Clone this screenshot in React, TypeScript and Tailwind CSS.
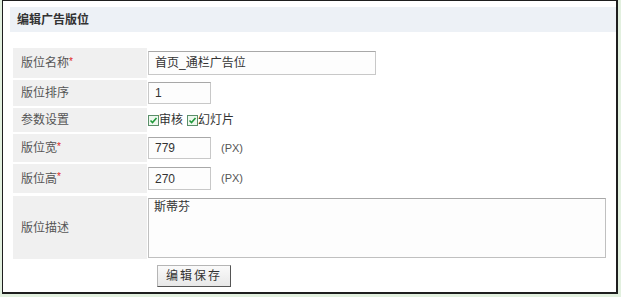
import React from 'react';

const Check: React.FC = () => (
  <svg width="11" height="11" viewBox="0 0 11 11" className="shrink-0">
    <rect x="0.5" y="0.5" width="10" height="10" fill="#eef8ee" stroke="#5b8f6a" />
    <path d="M2.5 5.5 L4.5 7.5 L8.5 3" fill="none" stroke="#1f9a3a" strokeWidth="1.6" />
  </svg>
);

const Label: React.FC<{ text: string; required?: boolean; h: string }> = ({ text, required, h }) => (
  <div className={`w-[134px] shrink-0 bg-[#f0f0f0] flex items-center pl-[8px] text-[#555] ${h}`}>
    {text}
    {required && <span className="text-[#e02020] text-[10px] -mt-[4px]">*</span>}
  </div>
);

const inputCls =
  'h-[22px] border border-[#c8c8c8] border-t-[#a8a8a8] bg-[#fdfdfd] px-[6px] flex items-center text-[#333] text-[12px]';

export default function App() {
  return (
    <div className="min-h-screen bg-[#e2f0df] font-['Liberation_Sans','Noto_Sans_CJK_SC',sans-serif] text-[12px]">
      <div className="ml-[2px] w-[616px] h-[294px] border-l border-t border-r-2 border-b-2 border-[#1e1e1e] bg-white pt-[6px] pl-[7px]">
        {/* 标题 */}
        <div className="h-[25px] bg-[#edf1f6] flex items-center pl-[7px] font-bold text-[#333]">编辑广告版位</div>

        {/* 表单 */}
        <div className="mt-[16px] ml-[3px] flex flex-col gap-[2px]">
          <div className="flex">
            <Label text="版位名称" required h="h-[30px]" />
            <div className="pl-[1px] flex items-center">
              <div className={`${inputCls} w-[228px] h-[24px]`}>首页_通栏广告位</div>
            </div>
          </div>
          <div className="flex">
            <Label text="版位排序" h="h-[26px]" />
            <div className="pl-[1px] flex items-center">
              <div className={`${inputCls} w-[63px]`}>1</div>
            </div>
          </div>
          <div className="flex">
            <Label text="参数设置" h="h-[24px]" />
            <div className="pl-[1px] flex items-center text-[#333]">
              <Check />
              <span className="mr-[4px]">审核</span>
              <Check />
              <span>幻灯片</span>
            </div>
          </div>
          <div className="flex">
            <Label text="版位宽" required h="h-[28px]" />
            <div className="pl-[1px] flex items-center">
              <div className={`${inputCls} w-[63px]`}>779</div>
              <span className="ml-[10px] text-[11px] text-[#555]">(PX)</span>
            </div>
          </div>
          <div className="flex">
            <Label text="版位高" required h="h-[29px]" />
            <div className="pl-[1px] flex items-center">
              <div className={`${inputCls} w-[63px] h-[23px]`}>270</div>
              <span className="ml-[10px] text-[11px] text-[#555]">(PX)</span>
            </div>
          </div>
          <div className="flex mt-[1px]">
            <Label text="版位描述" h="h-[63px]" />
            <div className="pl-[1px] flex items-center">
              <div className="w-[458px] h-[60px] border border-[#c0c0c0] border-t-[#a8a8a8] bg-[#fdfdfd] px-[5px] pt-[1px] text-[#333] leading-[14px]">
                斯蒂芬
              </div>
            </div>
          </div>
        </div>

        <div className="mt-[6px] ml-[147px]">
          <button className="w-[74px] h-[22px] border border-[#b5b5b5] border-r-[#555] border-b-[#555] bg-gradient-to-b from-[#fafafa] to-[#e8e8e8] text-[#333] text-[12px] tracking-[2px] flex items-center justify-center">
            编辑保存
          </button>
        </div>
      </div>
    </div>
  );
}
